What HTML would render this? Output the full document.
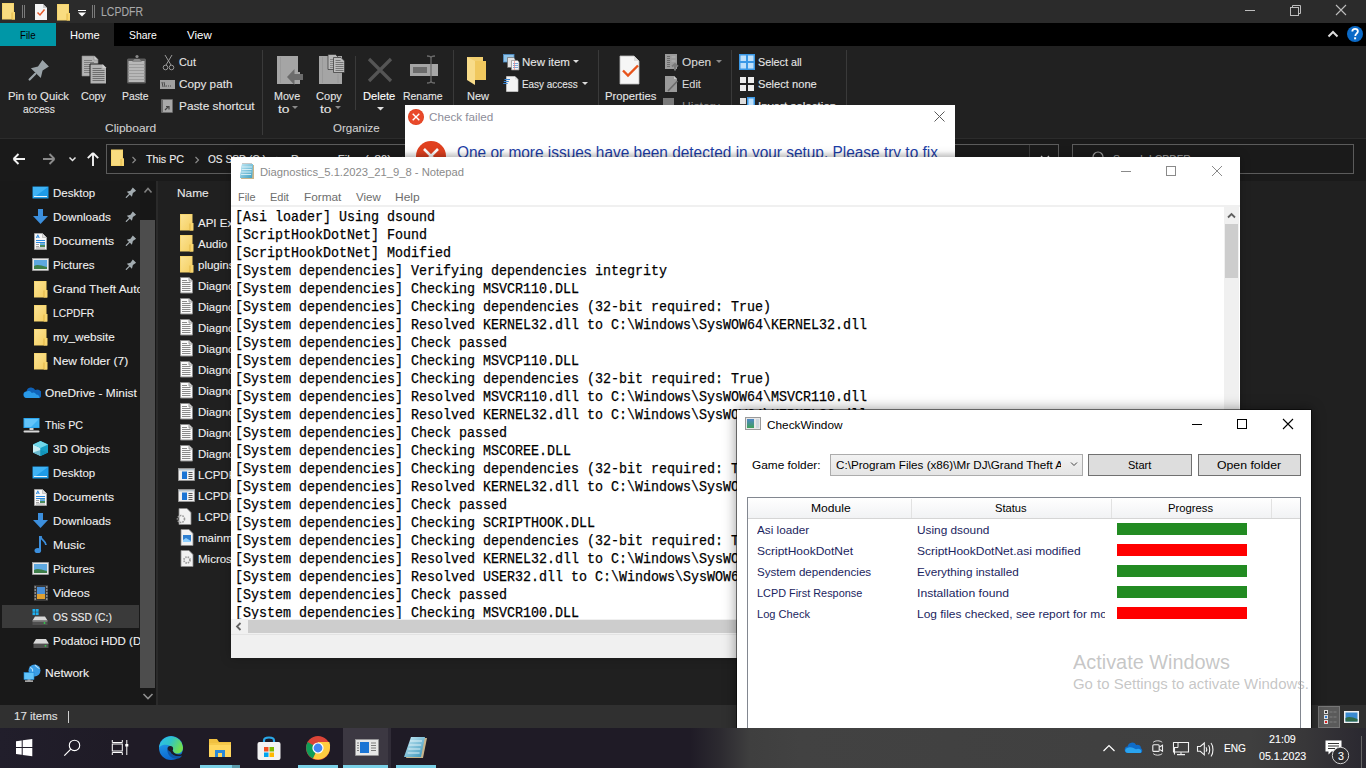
<!DOCTYPE html>
<html><head><meta charset="utf-8"><title>LCPDFR</title>
<style>
*{margin:0;padding:0;box-sizing:border-box}
html,body{width:1366px;height:768px;overflow:hidden;background:#202020;font-family:"Liberation Sans",sans-serif;font-size:12px;color:#fff}
.a{position:absolute}
.t{position:absolute;white-space:nowrap;line-height:1;transform-origin:0 0}
.m{position:absolute;white-space:pre;font-family:"Liberation Mono",monospace;font-size:14.5px;line-height:18px;color:#000;transform:scaleX(0.9195);transform-origin:0 0;-webkit-text-stroke:0.25px #000}
svg{display:block}
</style></head><body>
<div class="a" style="left:0px;top:0px;width:1366px;height:23px;background:#2b2b2b;"></div>
<svg class="a" style="left:0px;top:0px;" width="100" height="23" viewBox="0 0 100 23">
<path d="M2 3h12v9h1v7.5H2z" fill="#f6d46a"/><path d="M2.8 3.8h10.4v14.9H2.8z" fill="#f9dc80"/><path d="M12 12h3v7.5h-3z" fill="#f8d670"/><path d="M12 12.5v7" stroke="#dcae3c" stroke-width="0.8"/>
<rect x="22" y="5" width="1" height="13" fill="#7a7a7a"/><rect x="24" y="5" width="1" height="13" fill="#7a7a7a"/>
<path d="M35 4h8l4 4v12H35z" fill="#f5f5f5"/><path d="M43 4v4h4" fill="#ccc"/><path d="M37.5 12.5l2.5 2.5 4.5-5.5" stroke="#e55a2b" stroke-width="1.5" fill="none"/>
<path d="M57 4h12v9h1v7.5H57z" fill="#f6d46a"/><path d="M57.8 4.8h10.4v14.9H57.8z" fill="#f9dc80"/><path d="M67 13h3v7.5h-3z" fill="#f8d670"/><path d="M67 13.5v7" stroke="#dcae3c" stroke-width="0.8"/>
<rect x="78" y="10" width="8" height="1" fill="#fff"/><path d="M78 12.5h8l-4 4z" fill="#fff"/>
<rect x="92" y="5" width="1" height="13" fill="#7a7a7a"/><rect x="94" y="5" width="1" height="13" fill="#7a7a7a"/>
</svg>
<div class="t" style="left:101.00px;top:6.42px;font-size:12.5px;color:#a9a9a9;-webkit-text-stroke:0.1px #a9a9a9;transform:scaleX(0.8400);">LCPDFR</div>
<svg class="a" style="left:1240px;top:0px;" width="126" height="23" viewBox="0 0 126 23">
<rect x="5" y="10" width="10" height="1" fill="#bdbdbd"/>
<rect x="50.5" y="7.5" width="8" height="8" fill="none" stroke="#bdbdbd"/><path d="M52.5 7.5v-2h8v8h-2" fill="none" stroke="#bdbdbd"/>
<path d="M96 5l10 10M106 5l-10 10" stroke="#bdbdbd" stroke-width="1.1"/>
</svg>
<div class="a" style="left:0px;top:23px;width:1366px;height:23px;background:#000;"></div>
<div class="a" style="left:0px;top:23px;width:56px;height:23px;background:#0097a7;"></div>
<div class="a" style="left:56px;top:23px;width:58px;height:23px;background:#212121;"></div>
<div class="t" style="left:20.00px;top:30.27px;font-size:11.5px;color:#000;transform:scaleX(0.8421);">File</div>
<div class="t" style="left:70.00px;top:30.27px;font-size:11.5px;color:#fff;transform:scaleX(0.9677);">Home</div>
<div class="t" style="left:129.00px;top:30.27px;font-size:11.5px;color:#fff;transform:scaleX(0.9032);">Share</div>
<div class="t" style="left:187.00px;top:30.27px;font-size:11.5px;color:#fff;transform:scaleX(1.0000);">View</div>
<svg class="a" style="left:1320px;top:23px;" width="46" height="23" viewBox="0 0 46 23">
<path d="M8.5 13.5l4.5-4.5 4.5 4.5" stroke="#dcdcdc" stroke-width="2" fill="none"/>
<circle cx="35" cy="11" r="8" fill="#0b6ac7"/>
<path d="M32.3 8.6c0-1.8 1.2-2.8 2.8-2.8s2.8 1 2.8 2.5c0 1.2-.7 1.8-1.5 2.4-.7.5-1 .9-1 1.8v.4" stroke="#fff" stroke-width="1.8" fill="none"/>
<rect x="34.1" y="14.3" width="2" height="2" fill="#fff"/>
</svg>
<div class="a" style="left:0px;top:46px;width:1366px;height:92px;background:#212121;"></div>
<div class="a" style="left:0px;top:138px;width:1366px;height:1px;background:#2c2c2c;"></div>
<div class="a" style="left:262px;top:50px;width:1px;height:85px;background:#3a3a3a;"></div>
<div class="a" style="left:453px;top:50px;width:1px;height:85px;background:#3a3a3a;"></div>
<div class="a" style="left:598px;top:50px;width:1px;height:85px;background:#3a3a3a;"></div>
<div class="a" style="left:731px;top:50px;width:1px;height:85px;background:#3a3a3a;"></div>
<div class="a" style="left:846px;top:50px;width:1px;height:85px;background:#3a3a3a;"></div>
<div class="a" style="left:355px;top:56px;width:1px;height:54px;background:#3a3a3a;"></div>
<svg class="a" style="left:20px;top:50px;" width="40" height="40" viewBox="0 0 40 40"><path d="M22.4 9.9L28.9 16.4 22.6 20.6 20.8 27.9 10.9 18.2 18 16.5z" fill="#9aa3a8"/>
<path d="M15.3 23.8L9.6 29.5" stroke="#9aa3a8" stroke-width="2.2" stroke-linecap="round"/>
</svg>
<div class="t" style="left:8.00px;top:91.27px;font-size:11.5px;color:#e6e6e6;-webkit-text-stroke:0.1px #e6e6e6;transform:scaleX(0.9841);">Pin to Quick</div>
<div class="t" style="left:23.00px;top:104.27px;font-size:11.5px;color:#e6e6e6;-webkit-text-stroke:0.1px #e6e6e6;transform:scaleX(0.8889);">access</div>
<svg class="a" style="left:76px;top:50px;" width="76" height="40" viewBox="0 0 76 40">
<path d="M6 6h12.5l3.5 3.5V26H6z" fill="#b3b3b3" stroke="#8a8a8a" stroke-width="0.6"/>
<path d="M18 6v4h4" fill="#cfcfcf" stroke="#8a8a8a" stroke-width="0.6"/>
<path d="M8 10.5h8M8 12.5h10M8 14.5h10M8 16.5h10M8 18.5h10M8 20.5h10M8 22.5h10" stroke="#7d7d7d" stroke-width="1"/>
<path d="M14 14h12.5l4 4V34H14z" fill="#b3b3b3" stroke="#1f1f1f" stroke-width="1"/>
<path d="M26.5 14v4h4" fill="#cfcfcf"/>
<path d="M16.5 18.5h9M16.5 20.5h12M16.5 22.5h12M16.5 24.5h12M16.5 26.5h12M16.5 28.5h12M16.5 30.5h12" stroke="#6e6e6e" stroke-width="1"/>
<rect x="51" y="8.5" width="19" height="25" rx="1.5" fill="#5e5e5e"/>
<rect x="52.5" y="11" width="16" height="21" fill="#b8b8b8"/>
<path d="M52.5 14.5h16M52.5 17.5h16M52.5 20.5h16M52.5 23.5h16M52.5 26.5h16M52.5 29.5h16" stroke="#9d9d9d" stroke-width="1"/>
<path d="M56 12l2.5-3h5l2.5 3z" fill="#8a8a8a"/><circle cx="61" cy="6.5" r="1.6" fill="#8a8a8a"/>
</svg>
<div class="t" style="left:81.00px;top:91.27px;font-size:11.5px;color:#e6e6e6;-webkit-text-stroke:0.1px #e6e6e6;transform:scaleX(0.9259);">Copy</div>
<div class="t" style="left:122.00px;top:91.27px;font-size:11.5px;color:#e6e6e6;-webkit-text-stroke:0.1px #e6e6e6;transform:scaleX(0.9000);">Paste</div>
<svg class="a" style="left:161px;top:54px;" width="16" height="17" viewBox="0 0 16 17"><path d="M4 1l6 10M11 1L5 11" stroke="#9a9a9a" stroke-width="1"/>
<circle cx="4.5" cy="13.5" r="2.3" fill="none" stroke="#9a9a9a"/><circle cx="10.5" cy="13.5" r="2.3" fill="none" stroke="#9a9a9a"/></svg>
<div class="t" style="left:179.00px;top:57.27px;font-size:11.5px;color:#e6e6e6;-webkit-text-stroke:0.1px #e6e6e6;transform:scaleX(0.9474);">Cut</div>
<svg class="a" style="left:160px;top:79px;" width="16" height="11" viewBox="0 0 16 11"><rect x="0" y="1" width="15" height="9" fill="#a0a0a0"/><path d="M2 3l1 5M4 3l1 5M6 7h1M8 7h1M10 7h1" stroke="#333" stroke-width="0.8"/></svg>
<div class="t" style="left:179.00px;top:79.27px;font-size:11.5px;color:#e6e6e6;-webkit-text-stroke:0.1px #e6e6e6;transform:scaleX(1.0192);">Copy path</div>
<svg class="a" style="left:160px;top:97px;" width="16" height="17" viewBox="0 0 16 17"><rect x="1" y="2" width="12" height="14" rx="1" fill="#6a6a6a"/><rect x="3" y="3" width="9" height="12" fill="#a8a8a8"/>
<path d="M5 13l3-3M6 9.5h3v3" stroke="#444" stroke-width="1.2" fill="none"/></svg>
<div class="t" style="left:179.00px;top:101.27px;font-size:11.5px;color:#e6e6e6;-webkit-text-stroke:0.1px #e6e6e6;transform:scaleX(1.0270);">Paste shortcut</div>
<div class="t" style="left:105.00px;top:123.27px;font-size:11.5px;color:#cfcfcf;-webkit-text-stroke:0.1px #cfcfcf;transform:scaleX(1.0408);">Clipboard</div>
<svg class="a" style="left:270px;top:50px;" width="80" height="40" viewBox="0 0 80 40">
<rect x="7" y="6" width="21" height="28" fill="#a5a5a5"/><path d="M10.5 7v26" stroke="#9a9a9a" stroke-width="1"/>
<path d="M27 22h3v12h-3z" fill="#a5a5a5"/>
<path d="M17 27l7.5-8v5h8.5v6H24.5v5z" fill="#6c6c6c"/>
<rect x="49" y="6" width="23" height="28" fill="#a5a5a5"/><path d="M52.5 7v26M68 24v9" stroke="#999" stroke-width="1"/>
<path d="M58 4.5h7.5l3 3V19.5H58z" fill="#b8b8b8" stroke="#333" stroke-width="0.7"/>
<path d="M60 9.5h6M60 11.5h6M60 13.5h6M60 15.5h6M60 17.5h6" stroke="#7a7a7a" stroke-width="0.8"/>
<path d="M63.5 7.5h7.5l3.5 3.5V22.5H63.5z" fill="#bdbdbd" stroke="#333" stroke-width="0.7"/>
<path d="M65.5 10.5h5M65.5 12.5h8M65.5 14.5h8M65.5 16.5h8M65.5 18.5h8M65.5 20.5h8" stroke="#6e6e6e" stroke-width="0.9"/>
</svg>
<div class="t" style="left:274.00px;top:91.27px;font-size:11.5px;color:#e6e6e6;-webkit-text-stroke:0.1px #e6e6e6;transform:scaleX(0.9310);">Move</div>
<div class="t" style="left:278.00px;top:104.27px;font-size:11.5px;color:#e6e6e6;-webkit-text-stroke:0.1px #e6e6e6;transform:scaleX(1.2000);">to</div>
<svg class="a" style="left:292px;top:106px;" width="8" height="4" viewBox="0 0 8 4"><path d="M0 0h6l-3 3z" fill="#8a8a8a"/></svg>
<div class="t" style="left:316.00px;top:91.27px;font-size:11.5px;color:#e6e6e6;-webkit-text-stroke:0.1px #e6e6e6;transform:scaleX(0.9630);">Copy</div>
<div class="t" style="left:320.00px;top:104.27px;font-size:11.5px;color:#e6e6e6;-webkit-text-stroke:0.1px #e6e6e6;transform:scaleX(1.2000);">to</div>
<svg class="a" style="left:335px;top:106px;" width="8" height="4" viewBox="0 0 8 4"><path d="M0 0h6l-3 3z" fill="#8a8a8a"/></svg>
<svg class="a" style="left:366px;top:56px;" width="28" height="28" viewBox="0 0 28 28"><path d="M3 3l22 22M25 3L3 25" stroke="#555" stroke-width="3.2"/></svg>
<div class="t" style="left:363.00px;top:91.27px;font-size:11.5px;color:#ffffff;-webkit-text-stroke:0.1px #ffffff;transform:scaleX(0.9706);">Delete</div>
<svg class="a" style="left:377px;top:107px;" width="8" height="4" viewBox="0 0 8 4"><path d="M0 0h7l-3.5 3.5z" fill="#e0e0e0"/></svg>
<svg class="a" style="left:408px;top:55px;" width="32" height="30" viewBox="0 0 32 30"><rect x="2" y="9" width="28" height="12" fill="#a5a5a5"/><rect x="5" y="12" width="14" height="6" fill="#6c6c6c"/>
<path d="M19 1c3 0 4 1 4 2v23c0 1 1 2 4 2M27 1c-3 0-4 1-4 2v23c0 1-1 2-4 2" stroke="#6c6c6c" stroke-width="1.3" fill="none"/></svg>
<div class="t" style="left:403.00px;top:91.27px;font-size:11.5px;color:#e6e6e6;-webkit-text-stroke:0.1px #e6e6e6;transform:scaleX(0.9091);">Rename</div>
<div class="t" style="left:333.00px;top:123.27px;font-size:11.5px;color:#cfcfcf;-webkit-text-stroke:0.1px #cfcfcf;transform:scaleX(1.0000);">Organize</div>
<svg class="a" style="left:465px;top:56px;" width="24" height="30" viewBox="0 0 24 30"><path d="M2 1h16v6h3v17H2z" fill="#f2cf6f"/><path d="M2 1l8 4v24l-8-5z" fill="#f8dc8a"/><path d="M10 5h11v19H10z" fill="#f0c85e"/></svg>
<div class="t" style="left:467.00px;top:91.27px;font-size:11.5px;color:#e6e6e6;-webkit-text-stroke:0.1px #e6e6e6;transform:scaleX(0.9583);">New</div>
<svg class="a" style="left:495px;top:50px;" width="30" height="45" viewBox="0 0 30 45">
<rect x="8.5" y="4.5" width="10.5" height="7.5" fill="#8fc3e8" stroke="#4f8fc8" stroke-width="0.8"/>
<path d="M12.5 7.5h6l1.5 1.5v8.5h-7.5z" fill="#e3e3e3" stroke="#6a6a6a" stroke-width="0.7"/>
<path d="M16.5 10.5h6l1.5 1.5v8h-7.5z" fill="#f5f5f5" stroke="#8a8a8a" stroke-width="0.7"/>
<path d="M18 13.5h5M18 15.5h5M18 17.5h5" stroke="#6a9fd8" stroke-width="0.9"/><path d="M19.5 11v9" stroke="#e88" stroke-width="0.7"/>
<path d="M11.5 26.5h8.5l3 3V41.5H11.5z" fill="#f4f4f4" stroke="#d0d0d0" stroke-width="0.7"/><path d="M20 26.5v3h3" fill="#ddd"/>
<path d="M9.5 29.5h5.5M8.8 31.5h5M8.2 33.5h4.5" stroke="#3a86d4" stroke-width="1"/>
</svg>
<div class="t" style="left:522.00px;top:57.27px;font-size:11.5px;color:#e6e6e6;-webkit-text-stroke:0.1px #e6e6e6;transform:scaleX(1.0000);">New item</div>
<svg class="a" style="left:573px;top:60px;" width="8" height="4" viewBox="0 0 8 4"><path d="M0 0h6l-3 3z" fill="#dcdcdc"/></svg>
<div class="t" style="left:522.00px;top:79.27px;font-size:11.5px;color:#e6e6e6;-webkit-text-stroke:0.1px #e6e6e6;transform:scaleX(0.8615);">Easy access</div>
<svg class="a" style="left:582px;top:82px;" width="8" height="4" viewBox="0 0 8 4"><path d="M0 0h6l-3 3z" fill="#dcdcdc"/></svg>
<svg class="a" style="left:617px;top:54px;" width="26" height="32" viewBox="0 0 26 32"><path d="M3 2h14l5 5v23H3z" fill="#f6f6f6" stroke="#bdbdbd" stroke-width="0.8"/><path d="M17 2v5h5" fill="#dcdcdc"/>
<path d="M6 16.5l5 5 10-10" stroke="#e8541c" stroke-width="2.4" fill="none"/></svg>
<div class="t" style="left:605.00px;top:91.27px;font-size:11.5px;color:#e6e6e6;-webkit-text-stroke:0.1px #e6e6e6;transform:scaleX(0.9811);">Properties</div>
<svg class="a" style="left:655px;top:50px;" width="105" height="56" viewBox="0 0 105 56">
<rect x="10" y="4" width="12" height="15" fill="#9a9a9a"/>
<path d="M12 6.5h3M12 8.5h3M12 10.5h3M12 12.5h3M12 14.5h3M12 16.5h3" stroke="#6a6a6a" stroke-width="1"/>
<path d="M16.5 7h4M16.5 11h4" stroke="#bdbdbd" stroke-width="0.8"/>
<path d="M17 16.5l3-2.5 3 2.5M20 14.5v6" stroke="#7a7a7a" stroke-width="2" fill="none"/>
<path d="M10 26h9l3 3v13H10z" fill="#9a9a9a"/><path d="M19 26v3h3" fill="#c8c8c8"/>
<path d="M13 41L22.5 31" stroke="#6a6a6a" stroke-width="1.6"/>
<rect x="8" y="48" width="11" height="8" fill="#7a7a7a"/>
<rect x="84" y="4" width="16" height="16" fill="#3a98e6"/>
<rect x="85.5" y="5.5" width="5.5" height="5.5" fill="#bfe0fa"/><rect x="93" y="5.5" width="5.5" height="5.5" fill="#bfe0fa"/>
<rect x="85.5" y="13" width="5.5" height="5.5" fill="#bfe0fa"/><rect x="93" y="13" width="5.5" height="5.5" fill="#bfe0fa"/>
<rect x="85" y="27" width="6" height="6" fill="#eeeeee"/><rect x="93" y="27" width="6" height="6" fill="#eeeeee"/>
<rect x="85" y="35" width="6" height="6" fill="#eeeeee"/><rect x="93" y="35" width="6" height="6" fill="#eeeeee"/>
<rect x="85" y="48" width="6" height="6" fill="#dddddd"/><rect x="92" y="47" width="8" height="9" fill="#3a98e6"/><rect x="93.5" y="48.5" width="5" height="7" fill="#bfe0fa"/>
</svg>
<div class="t" style="left:682.00px;top:57.27px;font-size:11.5px;color:#d8d8d8;-webkit-text-stroke:0.1px #d8d8d8;transform:scaleX(1.0357);">Open</div>
<svg class="a" style="left:716px;top:60px;" width="8" height="4" viewBox="0 0 8 4"><path d="M0 0h6l-3 3z" fill="#8a8a8a"/></svg>
<div class="t" style="left:682.00px;top:79.27px;font-size:11.5px;color:#d8d8d8;-webkit-text-stroke:0.1px #d8d8d8;transform:scaleX(0.9524);">Edit</div>
<div class="t" style="left:682.00px;top:101.27px;font-size:11.5px;color:#8a8a8a;transform:scaleX(1.0556);">History</div>
<div class="t" style="left:758.00px;top:57.27px;font-size:11.5px;color:#e6e6e6;-webkit-text-stroke:0.1px #e6e6e6;transform:scaleX(0.9362);">Select all</div>
<div class="t" style="left:758.00px;top:79.27px;font-size:11.5px;color:#e6e6e6;-webkit-text-stroke:0.1px #e6e6e6;transform:scaleX(0.9672);">Select none</div>
<div class="t" style="left:758.00px;top:101.27px;font-size:11.5px;color:#e6e6e6;-webkit-text-stroke:0.1px #e6e6e6;transform:scaleX(1.0130);">Invert selection</div>
<div class="a" style="left:0px;top:139px;width:1366px;height:42px;background:#1a1a1a;"></div>
<svg class="a" style="left:0px;top:150px;" width="106" height="18" viewBox="0 0 106 18">
<path d="M13.5 9H25M13.5 9l5-5M13.5 9l5 5" stroke="#f2f2f2" stroke-width="1.9" fill="none"/>
<path d="M43 9H54.5M54.5 9l-5-5M54.5 9l-5 5" stroke="#8a8a8a" stroke-width="1.9" fill="none"/>
<path d="M69.5 7.5l3 3 3-3" stroke="#e6e6e6" stroke-width="1.5" fill="none"/>
<path d="M93 16V3M93 3l-5.2 5.2M93 3l5.2 5.2" stroke="#f2f2f2" stroke-width="1.9" fill="none"/>
</svg>
<div class="a" style="left:106px;top:144px;width:953px;height:30px;background:transparent;border:1px solid #5b5b5b"></div>
<div class="a" style="left:1072px;top:144px;width:282px;height:30px;background:transparent;border:1px solid #5b5b5b"></div>
<div class="a" style="left:1029px;top:145px;width:1px;height:28px;background:#3a3a3a;"></div>
<svg class="a" style="left:111px;top:149px;" width="16" height="18" viewBox="0 0 16 18"><path d="M0 0.5h12v9h1v7.5H0z" fill="#f6d46a"/><path d="M0.8 1.3h10.4v14.9H0.8z" fill="#f9dc80"/><path d="M10 9.5h3v7.5h-3z" fill="#f8d670"/><path d="M10 10v7" stroke="#dcae3c" stroke-width="0.8"/></svg>
<svg class="a" style="left:130px;top:155px;" width="8" height="10" viewBox="0 0 8 10"><path d="M2.5 2l3 3-3 3" stroke="#8a8a8a" stroke-width="1.2" fill="none"/></svg>
<div class="t" style="left:146.00px;top:154.27px;font-size:11.5px;color:#f0f0f0;-webkit-text-stroke:0.1px #f0f0f0;transform:scaleX(0.9286);">This PC</div>
<svg class="a" style="left:193px;top:155px;" width="8" height="10" viewBox="0 0 8 10"><path d="M2.5 2l3 3-3 3" stroke="#8a8a8a" stroke-width="1.2" fill="none"/></svg>
<div class="t" style="left:208.00px;top:154.27px;font-size:11.5px;color:#f0f0f0;-webkit-text-stroke:0.1px #f0f0f0;transform:scaleX(0.8788);">OS SSD (C:)</div>
<svg class="a" style="left:274px;top:155px;" width="8" height="10" viewBox="0 0 8 10"><path d="M2.5 2l3 3-3 3" stroke="#8a8a8a" stroke-width="1.2" fill="none"/></svg>
<div class="t" style="left:291.00px;top:154.27px;font-size:11.5px;color:#f0f0f0;-webkit-text-stroke:0.1px #f0f0f0;transform:scaleX(0.9901);">Program Files (x86)</div>
<svg class="a" style="left:400px;top:155px;" width="8" height="10" viewBox="0 0 8 10"><path d="M2.5 2l3 3-3 3" stroke="#8a8a8a" stroke-width="1.2" fill="none"/></svg>
<svg class="a" style="left:1040px;top:154px;" width="10" height="8" viewBox="0 0 10 8"><path d="M1 2l4 4 4-4" stroke="#cfcfcf" stroke-width="1.3" fill="none"/></svg>
<svg class="a" style="left:1088px;top:150px;" width="18" height="18" viewBox="0 0 18 18"><circle cx="10" cy="7" r="5" fill="none" stroke="#999" stroke-width="1.2"/><path d="M6.5 10.5L2 15" stroke="#999" stroke-width="1.4"/></svg>
<div class="t" style="left:1113.00px;top:154.27px;font-size:11.5px;color:#9a9a9a;-webkit-text-stroke:0.1px #9a9a9a;transform:scaleX(0.9070);">Search LCPDFR</div>
<div class="a" style="left:0px;top:181px;width:1366px;height:524px;background:#202020;"></div>
<div class="a" style="left:0px;top:181px;width:140px;height:524px;background:#191919;"></div>
<div class="a" style="left:140px;top:181px;width:16px;height:524px;background:#171717;"></div>
<div class="a" style="left:156px;top:181px;width:2px;height:524px;background:#2a2a2a;"></div>
<div class="a" style="left:140px;top:220px;width:15px;height:468px;background:#4d4d4d;"></div>
<svg class="a" style="left:140px;top:183px;" width="16" height="14" viewBox="0 0 16 14"><path d="M4.5 9.5l3.5-4 3.5 4" stroke="#808080" stroke-width="1.6" fill="none"/></svg>
<svg class="a" style="left:140px;top:690px;" width="16" height="14" viewBox="0 0 16 14"><path d="M3.5 4l4.5 4.5 4.5-4.5" stroke="#8f8f8f" stroke-width="1.6" fill="none"/></svg>
<div class="a" style="left:0px;top:181px;width:140px;height:524px;background:transparent;overflow:hidden;">
<svg class="a" style="left:32px;top:5px;" width="18" height="14" viewBox="0 0 18 14"><rect x="0.5" y="0.5" width="16" height="12" fill="#1e9be8"/><path d="M1 1h15L1 12z" fill="#3fb3f5"/><rect x="2" y="10" width="13" height="1" fill="#e6f4fc"/></svg>
<div class="t" style="left:53.00px;top:6.77px;font-size:11.5px;color:#f0f0f0;-webkit-text-stroke:0.1px #f0f0f0;transform:scaleX(1.0000);">Desktop</div>
<svg class="a" style="left:125px;top:5px;" width="12" height="13" viewBox="0 0 12 13"><path d="M7.8 1.4L11.1 4.8 7.9 7 6.9 10.8 1.8 5.7 5.5 4.8z" fill="#a3acb1"/><path d="M4.3 8.4L1.3 11.4" stroke="#a3acb1" stroke-width="1.3" stroke-linecap="round"/></svg>
<svg class="a" style="left:32px;top:27px;" width="18" height="18" viewBox="0 0 18 18"><path d="M6 1h5v7h5l-7.5 8L1 8h5z" fill="#3c8fdd"/></svg>
<div class="t" style="left:53.00px;top:30.77px;font-size:11.5px;color:#f0f0f0;-webkit-text-stroke:0.1px #f0f0f0;transform:scaleX(1.0175);">Downloads</div>
<svg class="a" style="left:125px;top:29px;" width="12" height="13" viewBox="0 0 12 13"><path d="M7.8 1.4L11.1 4.8 7.9 7 6.9 10.8 1.8 5.7 5.5 4.8z" fill="#a3acb1"/><path d="M4.3 8.4L1.3 11.4" stroke="#a3acb1" stroke-width="1.3" stroke-linecap="round"/></svg>
<svg class="a" style="left:34px;top:52px;" width="14" height="18" viewBox="0 0 14 18"><path d="M0.5 0.5h8l4 4v12H0.5z" fill="#f7f7f7" stroke="#a8a8a8" stroke-width="0.8"/><path d="M8.5 0.5v4h4" fill="#ddd" stroke="#a8a8a8" stroke-width="0.6"/><path d="M2.3 5l1.5-3.2 1.5 3.2M2.8 4h2" stroke="#2b8ae0" stroke-width="0.9" fill="none"/><path d="M2 7.5h9M2 9.5h9" stroke="#2b8ae0" stroke-width="1"/><path d="M2 11.5h3M2 13.5h3M2 15h9" stroke="#9a9a9a" stroke-width="0.9"/><rect x="6" y="10.5" width="5" height="3.5" fill="#4a8a5a"/><rect x="6" y="10.5" width="5" height="1.5" fill="#5aaae8"/></svg>
<div class="t" style="left:53.00px;top:54.77px;font-size:11.5px;color:#f0f0f0;-webkit-text-stroke:0.1px #f0f0f0;transform:scaleX(1.0517);">Documents</div>
<svg class="a" style="left:125px;top:53px;" width="12" height="13" viewBox="0 0 12 13"><path d="M7.8 1.4L11.1 4.8 7.9 7 6.9 10.8 1.8 5.7 5.5 4.8z" fill="#a3acb1"/><path d="M4.3 8.4L1.3 11.4" stroke="#a3acb1" stroke-width="1.3" stroke-linecap="round"/></svg>
<svg class="a" style="left:32px;top:76px;" width="18" height="16" viewBox="0 0 18 16"><rect x="0.5" y="1.5" width="16" height="12" fill="#e8e8e8" stroke="#aaa" stroke-width="0.6"/><rect x="2" y="3" width="13" height="9" fill="#5ea8e0"/><path d="M2 9c3-2 6-1 13 1v2H2z" fill="#3f7f4a"/></svg>
<div class="t" style="left:53.00px;top:78.77px;font-size:11.5px;color:#f0f0f0;-webkit-text-stroke:0.1px #f0f0f0;transform:scaleX(1.0000);">Pictures</div>
<svg class="a" style="left:125px;top:77px;" width="12" height="13" viewBox="0 0 12 13"><path d="M7.8 1.4L11.1 4.8 7.9 7 6.9 10.8 1.8 5.7 5.5 4.8z" fill="#a3acb1"/><path d="M4.3 8.4L1.3 11.4" stroke="#a3acb1" stroke-width="1.3" stroke-linecap="round"/></svg>
<svg class="a" style="left:34px;top:100px;" width="14" height="17" viewBox="0 0 14 17"><defs><linearGradient id="fg34100" x1="0" y1="0" x2="1" y2="1"><stop offset="0" stop-color="#fbe394"/><stop offset="1" stop-color="#f5cf62"/></linearGradient></defs><path d="M0 0h12.5v9h0.8v7.5H0z" fill="#f6d46a"/><path d="M0.8 0.8h11v15H0.8z" fill="url(#fg34100)"/><path d="M10 9h3.3v7.5H10z" fill="#f8d670"/><path d="M10 9.5v7" stroke="#dcae3c" stroke-width="0.8"/></svg>
<div class="t" style="left:53.00px;top:102.77px;font-size:11.5px;color:#f0f0f0;-webkit-text-stroke:0.1px #f0f0f0;transform:scaleX(1.0306);">Grand Theft Auto V</div>
<svg class="a" style="left:34px;top:124px;" width="14" height="17" viewBox="0 0 14 17"><defs><linearGradient id="fg34124" x1="0" y1="0" x2="1" y2="1"><stop offset="0" stop-color="#fbe394"/><stop offset="1" stop-color="#f5cf62"/></linearGradient></defs><path d="M0 0h12.5v9h0.8v7.5H0z" fill="#f6d46a"/><path d="M0.8 0.8h11v15H0.8z" fill="url(#fg34124)"/><path d="M10 9h3.3v7.5H10z" fill="#f8d670"/><path d="M10 9.5v7" stroke="#dcae3c" stroke-width="0.8"/></svg>
<div class="t" style="left:53.00px;top:126.77px;font-size:11.5px;color:#f0f0f0;-webkit-text-stroke:0.1px #f0f0f0;transform:scaleX(0.8936);">LCPDFR</div>
<svg class="a" style="left:34px;top:148px;" width="14" height="17" viewBox="0 0 14 17"><defs><linearGradient id="fg34148" x1="0" y1="0" x2="1" y2="1"><stop offset="0" stop-color="#fbe394"/><stop offset="1" stop-color="#f5cf62"/></linearGradient></defs><path d="M0 0h12.5v9h0.8v7.5H0z" fill="#f6d46a"/><path d="M0.8 0.8h11v15H0.8z" fill="url(#fg34148)"/><path d="M10 9h3.3v7.5H10z" fill="#f8d670"/><path d="M10 9.5v7" stroke="#dcae3c" stroke-width="0.8"/></svg>
<div class="t" style="left:53.00px;top:150.77px;font-size:11.5px;color:#f0f0f0;-webkit-text-stroke:0.1px #f0f0f0;transform:scaleX(1.0164);">my_website</div>
<svg class="a" style="left:34px;top:172px;" width="14" height="17" viewBox="0 0 14 17"><defs><linearGradient id="fg34172" x1="0" y1="0" x2="1" y2="1"><stop offset="0" stop-color="#fbe394"/><stop offset="1" stop-color="#f5cf62"/></linearGradient></defs><path d="M0 0h12.5v9h0.8v7.5H0z" fill="#f6d46a"/><path d="M0.8 0.8h11v15H0.8z" fill="url(#fg34172)"/><path d="M10 9h3.3v7.5H10z" fill="#f8d670"/><path d="M10 9.5v7" stroke="#dcae3c" stroke-width="0.8"/></svg>
<div class="t" style="left:53.00px;top:174.77px;font-size:11.5px;color:#f0f0f0;-webkit-text-stroke:0.1px #f0f0f0;transform:scaleX(1.0417);">New folder (7)</div>
<svg class="a" style="left:23px;top:206px;" width="18" height="12" viewBox="0 0 18 12"><path d="M3.8 11a3.3 3.3 0 0 1-0.3-6.6A4.6 4.6 0 0 1 12.2 3 3.6 3.6 0 0 1 16.5 11z" fill="#0f62b8"/><path d="M3.8 11a3.3 3.3 0 0 1-0.5-6.5 4 4 0 0 1 5.5 1.5 3.6 3.6 0 0 1 4.5 1.5 3.2 3.2 0 0 1 3.2 3.5z" fill="#2a9ae8"/></svg>
<div class="t" style="left:45.00px;top:206.77px;font-size:11.5px;color:#f0f0f0;-webkit-text-stroke:0.1px #f0f0f0;transform:scaleX(1.0333);">OneDrive - Minist</div>
<svg class="a" style="left:22px;top:236px;" width="18" height="17" viewBox="0 0 18 17"><rect x="1.5" y="1" width="16" height="10" fill="#2aa6ef"/><path d="M2.5 2h14v8h-14z" fill="#62c4fa"/><path d="M9 10l7.5-7.5v7.5z" fill="#3cb0f2"/><rect x="7.5" y="11" width="4" height="2" fill="#d0d0d0"/><rect x="1.5" y="13.5" width="16" height="2" rx="1" fill="#d8d8d8"/></svg>
<div class="t" style="left:45.00px;top:238.77px;font-size:11.5px;color:#f0f0f0;-webkit-text-stroke:0.1px #f0f0f0;transform:scaleX(0.9286);">This PC</div>
<div class="a" style="left:2px;top:605px;width:137px;height:23px;background:#3a3a3a;top:424px"></div>
<svg class="a" style="left:32px;top:259px;" width="17" height="17" viewBox="0 0 17 17"><path d="M8.5 1L16 4.5v8L8.5 16 1 12.5v-8z" fill="#1aa3c8"/><path d="M8.5 8L1 4.5v8L8.5 16z" fill="#c8eff5"/><path d="M8.5 8L16 4.5v8L8.5 16z" fill="#17a0c6"/><path d="M1 4.5L8.5 1 16 4.5 8.5 8z" fill="#70d8ea"/><path d="M1 12.5L8.5 16 16 12.5 8.5 10z" fill="#0e86ab" opacity="0.5"/></svg>
<div class="t" style="left:53.00px;top:262.77px;font-size:11.5px;color:#f0f0f0;-webkit-text-stroke:0.1px #f0f0f0;transform:scaleX(1.0000);">3D Objects</div>
<svg class="a" style="left:32px;top:285px;" width="18" height="14" viewBox="0 0 18 14"><rect x="0.5" y="0.5" width="16" height="12" fill="#1e9be8"/><path d="M1 1h15L1 12z" fill="#3fb3f5"/><rect x="2" y="10" width="13" height="1" fill="#e6f4fc"/></svg>
<div class="t" style="left:53.00px;top:286.77px;font-size:11.5px;color:#f0f0f0;-webkit-text-stroke:0.1px #f0f0f0;transform:scaleX(1.0000);">Desktop</div>
<svg class="a" style="left:34px;top:308px;" width="14" height="18" viewBox="0 0 14 18"><path d="M0.5 0.5h8l4 4v12H0.5z" fill="#f7f7f7" stroke="#a8a8a8" stroke-width="0.8"/><path d="M8.5 0.5v4h4" fill="#ddd" stroke="#a8a8a8" stroke-width="0.6"/><path d="M2.3 5l1.5-3.2 1.5 3.2M2.8 4h2" stroke="#2b8ae0" stroke-width="0.9" fill="none"/><path d="M2 7.5h9M2 9.5h9" stroke="#2b8ae0" stroke-width="1"/><path d="M2 11.5h3M2 13.5h3M2 15h9" stroke="#9a9a9a" stroke-width="0.9"/><rect x="6" y="10.5" width="5" height="3.5" fill="#4a8a5a"/><rect x="6" y="10.5" width="5" height="1.5" fill="#5aaae8"/></svg>
<div class="t" style="left:53.00px;top:310.77px;font-size:11.5px;color:#f0f0f0;-webkit-text-stroke:0.1px #f0f0f0;transform:scaleX(1.0517);">Documents</div>
<svg class="a" style="left:32px;top:331px;" width="18" height="18" viewBox="0 0 18 18"><path d="M6 1h5v7h5l-7.5 8L1 8h5z" fill="#3c8fdd"/></svg>
<div class="t" style="left:53.00px;top:334.77px;font-size:11.5px;color:#f0f0f0;-webkit-text-stroke:0.1px #f0f0f0;transform:scaleX(1.0175);">Downloads</div>
<svg class="a" style="left:34px;top:355px;" width="14" height="18" viewBox="0 0 14 18"><path d="M5 1h2c0 3 5 4 5 8" stroke="#3c8fdd" stroke-width="1.8" fill="none"/><rect x="5" y="1" width="2" height="13" fill="#3c8fdd"/><ellipse cx="3.8" cy="14.5" rx="3.3" ry="2.6" fill="#3c8fdd"/></svg>
<div class="t" style="left:53.00px;top:358.77px;font-size:11.5px;color:#f0f0f0;-webkit-text-stroke:0.1px #f0f0f0;transform:scaleX(1.0667);">Music</div>
<svg class="a" style="left:32px;top:380px;" width="18" height="16" viewBox="0 0 18 16"><rect x="0.5" y="1.5" width="16" height="12" fill="#e8e8e8" stroke="#aaa" stroke-width="0.6"/><rect x="2" y="3" width="13" height="9" fill="#5ea8e0"/><path d="M2 9c3-2 6-1 13 1v2H2z" fill="#3f7f4a"/></svg>
<div class="t" style="left:53.00px;top:382.77px;font-size:11.5px;color:#f0f0f0;-webkit-text-stroke:0.1px #f0f0f0;transform:scaleX(1.0000);">Pictures</div>
<svg class="a" style="left:33px;top:403px;" width="16" height="18" viewBox="0 0 16 18"><rect x="1" y="1" width="14" height="16" fill="#3a3a3a"/><rect x="4" y="3" width="8" height="12" fill="#4a8fd6"/><path d="M4 10h8v5H4z" fill="#e0a030"/><path d="M1.5 3h1.5M1.5 6h1.5M1.5 9h1.5M1.5 12h1.5M1.5 15h1.5M13 3h1.5M13 6h1.5M13 9h1.5M13 12h1.5M13 15h1.5" stroke="#ddd" stroke-width="1"/></svg>
<div class="t" style="left:53.00px;top:406.77px;font-size:11.5px;color:#f0f0f0;-webkit-text-stroke:0.1px #f0f0f0;transform:scaleX(1.0571);">Videos</div>
<svg class="a" style="left:31px;top:427px;" width="18" height="18" viewBox="0 0 18 18"><rect x="1.5" y="1" width="2.8" height="2.8" fill="#1fb0f0"/><rect x="4.8" y="1" width="2.8" height="2.8" fill="#1fb0f0"/><rect x="1.5" y="4.3" width="2.8" height="2.8" fill="#1fb0f0"/><rect x="4.8" y="4.3" width="2.8" height="2.8" fill="#1fb0f0"/><path d="M4 8.5h10l2.5 4H1.5z" fill="#d8d8d8"/><rect x="1.5" y="12.5" width="15" height="4.5" fill="#505050"/><rect x="1.5" y="12.5" width="15" height="1" fill="#9a9a9a"/><circle cx="13.5" cy="15" r="0.9" fill="#2fd04a"/></svg>
<div class="t" style="left:53.00px;top:430.77px;font-size:11.5px;color:#f0f0f0;-webkit-text-stroke:0.1px #f0f0f0;transform:scaleX(0.8939);">OS SSD (C:)</div>
<svg class="a" style="left:32px;top:451px;" width="18" height="18" viewBox="0 0 18 18"><path d="M4 7h10l2.5 4H1.5z" fill="#d8d8d8"/><rect x="1.5" y="11" width="15" height="5" fill="#505050"/><rect x="1.5" y="11" width="15" height="1" fill="#a0a0a0"/><circle cx="13.5" cy="13.8" r="0.9" fill="#2fd04a"/></svg>
<div class="t" style="left:53.00px;top:454.77px;font-size:11.5px;color:#f0f0f0;-webkit-text-stroke:0.1px #f0f0f0;">Podatoci HDD (D:)</div>
<svg class="a" style="left:23px;top:483px;" width="18" height="18" viewBox="0 0 18 18"><circle cx="11.5" cy="6.5" r="6" fill="#3a9de6"/><path d="M7 3.5c2 0.5 3 2 2.5 4M12 1c1.5 1.5 2.5 3 4.5 3.5" stroke="#b8e2fb" stroke-width="1.1" fill="none"/><rect x="1" y="8.5" width="10" height="7" fill="#62c4fa" stroke="#1f8ad8" stroke-width="0.6"/><rect x="4.5" y="15.5" width="3" height="1" fill="#bbb"/><rect x="2" y="16.5" width="8" height="1.2" fill="#ddd"/></svg>
<div class="t" style="left:45.00px;top:486.77px;font-size:11.5px;color:#f0f0f0;-webkit-text-stroke:0.1px #f0f0f0;transform:scaleX(1.0465);">Network</div>
</div>
<div class="a" style="left:158px;top:181px;width:80px;height:524px;background:transparent;overflow:hidden;">
<div class="t" style="left:19.00px;top:7.27px;font-size:11.5px;color:#e8e8e8;-webkit-text-stroke:0.1px #e8e8e8;transform:scaleX(1.0323);">Name</div>
<svg class="a" style="left:22px;top:33px;" width="14" height="17" viewBox="0 0 14 17"><defs><linearGradient id="fg22033" x1="0" y1="0" x2="1" y2="1"><stop offset="0" stop-color="#fbe394"/><stop offset="1" stop-color="#f5cf62"/></linearGradient></defs><path d="M0 0h12.5v9h0.8v7.5H0z" fill="#f6d46a"/><path d="M0.8 0.8h11v15H0.8z" fill="url(#fg22033)"/><path d="M10 9h3.3v7.5H10z" fill="#f8d670"/><path d="M10 9.5v7" stroke="#dcae3c" stroke-width="0.8"/></svg>
<div class="t" style="left:40.00px;top:36.77px;font-size:11.5px;color:#f0f0f0;-webkit-text-stroke:0.1px #f0f0f0;">API Examples</div>
<svg class="a" style="left:22px;top:54px;" width="14" height="17" viewBox="0 0 14 17"><defs><linearGradient id="fg22054" x1="0" y1="0" x2="1" y2="1"><stop offset="0" stop-color="#fbe394"/><stop offset="1" stop-color="#f5cf62"/></linearGradient></defs><path d="M0 0h12.5v9h0.8v7.5H0z" fill="#f6d46a"/><path d="M0.8 0.8h11v15H0.8z" fill="url(#fg22054)"/><path d="M10 9h3.3v7.5H10z" fill="#f8d670"/><path d="M10 9.5v7" stroke="#dcae3c" stroke-width="0.8"/></svg>
<div class="t" style="left:40.00px;top:57.77px;font-size:11.5px;color:#f0f0f0;-webkit-text-stroke:0.1px #f0f0f0;">Audio</div>
<svg class="a" style="left:22px;top:75px;" width="14" height="17" viewBox="0 0 14 17"><defs><linearGradient id="fg22075" x1="0" y1="0" x2="1" y2="1"><stop offset="0" stop-color="#fbe394"/><stop offset="1" stop-color="#f5cf62"/></linearGradient></defs><path d="M0 0h12.5v9h0.8v7.5H0z" fill="#f6d46a"/><path d="M0.8 0.8h11v15H0.8z" fill="url(#fg22075)"/><path d="M10 9h3.3v7.5H10z" fill="#f8d670"/><path d="M10 9.5v7" stroke="#dcae3c" stroke-width="0.8"/></svg>
<div class="t" style="left:40.00px;top:78.77px;font-size:11.5px;color:#f0f0f0;-webkit-text-stroke:0.1px #f0f0f0;">plugins</div>
<svg class="a" style="left:22px;top:96px;" width="14" height="17" viewBox="0 0 14 17"><path d="M0.5 0.5h8.5l3.5 3.5v12H0.5z" fill="#fafafa" stroke="#8c8c8c" stroke-width="1"/><path d="M9 0.5v3.5h3.5" fill="#e0e0e0" stroke="#8c8c8c" stroke-width="0.8"/><path d="M2 3.5h5M2 5.5h8.5M2 7.5h8.5M2 9.5h8.5M2 11.5h8.5M2 13.5h8.5" stroke="#8a8a8a" stroke-width="1"/></svg>
<div class="t" style="left:40.00px;top:99.77px;font-size:11.5px;color:#f0f0f0;-webkit-text-stroke:0.1px #f0f0f0;">Diagnostics_5.1.2023</div>
<svg class="a" style="left:22px;top:117px;" width="14" height="17" viewBox="0 0 14 17"><path d="M0.5 0.5h8.5l3.5 3.5v12H0.5z" fill="#fafafa" stroke="#8c8c8c" stroke-width="1"/><path d="M9 0.5v3.5h3.5" fill="#e0e0e0" stroke="#8c8c8c" stroke-width="0.8"/><path d="M2 3.5h5M2 5.5h8.5M2 7.5h8.5M2 9.5h8.5M2 11.5h8.5M2 13.5h8.5" stroke="#8a8a8a" stroke-width="1"/></svg>
<div class="t" style="left:40.00px;top:120.77px;font-size:11.5px;color:#f0f0f0;-webkit-text-stroke:0.1px #f0f0f0;">Diagnostics_5.1.2023</div>
<svg class="a" style="left:22px;top:138px;" width="14" height="17" viewBox="0 0 14 17"><path d="M0.5 0.5h8.5l3.5 3.5v12H0.5z" fill="#fafafa" stroke="#8c8c8c" stroke-width="1"/><path d="M9 0.5v3.5h3.5" fill="#e0e0e0" stroke="#8c8c8c" stroke-width="0.8"/><path d="M2 3.5h5M2 5.5h8.5M2 7.5h8.5M2 9.5h8.5M2 11.5h8.5M2 13.5h8.5" stroke="#8a8a8a" stroke-width="1"/></svg>
<div class="t" style="left:40.00px;top:141.77px;font-size:11.5px;color:#f0f0f0;-webkit-text-stroke:0.1px #f0f0f0;">Diagnostics_5.1.2023</div>
<svg class="a" style="left:22px;top:159px;" width="14" height="17" viewBox="0 0 14 17"><path d="M0.5 0.5h8.5l3.5 3.5v12H0.5z" fill="#fafafa" stroke="#8c8c8c" stroke-width="1"/><path d="M9 0.5v3.5h3.5" fill="#e0e0e0" stroke="#8c8c8c" stroke-width="0.8"/><path d="M2 3.5h5M2 5.5h8.5M2 7.5h8.5M2 9.5h8.5M2 11.5h8.5M2 13.5h8.5" stroke="#8a8a8a" stroke-width="1"/></svg>
<div class="t" style="left:40.00px;top:162.77px;font-size:11.5px;color:#f0f0f0;-webkit-text-stroke:0.1px #f0f0f0;">Diagnostics_5.1.2023</div>
<svg class="a" style="left:22px;top:180px;" width="14" height="17" viewBox="0 0 14 17"><path d="M0.5 0.5h8.5l3.5 3.5v12H0.5z" fill="#fafafa" stroke="#8c8c8c" stroke-width="1"/><path d="M9 0.5v3.5h3.5" fill="#e0e0e0" stroke="#8c8c8c" stroke-width="0.8"/><path d="M2 3.5h5M2 5.5h8.5M2 7.5h8.5M2 9.5h8.5M2 11.5h8.5M2 13.5h8.5" stroke="#8a8a8a" stroke-width="1"/></svg>
<div class="t" style="left:40.00px;top:183.77px;font-size:11.5px;color:#f0f0f0;-webkit-text-stroke:0.1px #f0f0f0;">Diagnostics_5.1.2023</div>
<svg class="a" style="left:22px;top:201px;" width="14" height="17" viewBox="0 0 14 17"><path d="M0.5 0.5h8.5l3.5 3.5v12H0.5z" fill="#fafafa" stroke="#8c8c8c" stroke-width="1"/><path d="M9 0.5v3.5h3.5" fill="#e0e0e0" stroke="#8c8c8c" stroke-width="0.8"/><path d="M2 3.5h5M2 5.5h8.5M2 7.5h8.5M2 9.5h8.5M2 11.5h8.5M2 13.5h8.5" stroke="#8a8a8a" stroke-width="1"/></svg>
<div class="t" style="left:40.00px;top:204.77px;font-size:11.5px;color:#f0f0f0;-webkit-text-stroke:0.1px #f0f0f0;">Diagnostics_5.1.2023</div>
<svg class="a" style="left:22px;top:222px;" width="14" height="17" viewBox="0 0 14 17"><path d="M0.5 0.5h8.5l3.5 3.5v12H0.5z" fill="#fafafa" stroke="#8c8c8c" stroke-width="1"/><path d="M9 0.5v3.5h3.5" fill="#e0e0e0" stroke="#8c8c8c" stroke-width="0.8"/><path d="M2 3.5h5M2 5.5h8.5M2 7.5h8.5M2 9.5h8.5M2 11.5h8.5M2 13.5h8.5" stroke="#8a8a8a" stroke-width="1"/></svg>
<div class="t" style="left:40.00px;top:225.77px;font-size:11.5px;color:#f0f0f0;-webkit-text-stroke:0.1px #f0f0f0;">Diagnostics_5.1.2023</div>
<svg class="a" style="left:22px;top:243px;" width="14" height="17" viewBox="0 0 14 17"><path d="M0.5 0.5h8.5l3.5 3.5v12H0.5z" fill="#fafafa" stroke="#8c8c8c" stroke-width="1"/><path d="M9 0.5v3.5h3.5" fill="#e0e0e0" stroke="#8c8c8c" stroke-width="0.8"/><path d="M2 3.5h5M2 5.5h8.5M2 7.5h8.5M2 9.5h8.5M2 11.5h8.5M2 13.5h8.5" stroke="#8a8a8a" stroke-width="1"/></svg>
<div class="t" style="left:40.00px;top:246.77px;font-size:11.5px;color:#f0f0f0;-webkit-text-stroke:0.1px #f0f0f0;">Diagnostics_5.1.2023</div>
<svg class="a" style="left:22px;top:264px;" width="14" height="17" viewBox="0 0 14 17"><path d="M0.5 0.5h8.5l3.5 3.5v12H0.5z" fill="#fafafa" stroke="#8c8c8c" stroke-width="1"/><path d="M9 0.5v3.5h3.5" fill="#e0e0e0" stroke="#8c8c8c" stroke-width="0.8"/><path d="M2 3.5h5M2 5.5h8.5M2 7.5h8.5M2 9.5h8.5M2 11.5h8.5M2 13.5h8.5" stroke="#8a8a8a" stroke-width="1"/></svg>
<div class="t" style="left:40.00px;top:267.77px;font-size:11.5px;color:#f0f0f0;-webkit-text-stroke:0.1px #f0f0f0;">Diagnostics_5.1.2023</div>
<svg class="a" style="left:20px;top:287px;" width="17" height="14" viewBox="0 0 17 14"><rect x="0.5" y="0.5" width="16" height="12" fill="#f0f0f0" stroke="#9a9a9a" stroke-width="0.8"/><rect x="1" y="1" width="15" height="1.5" fill="#b8c4cc"/><rect x="4" y="3.5" width="5" height="7.5" fill="#1a74d4"/><path d="M10.5 4.5h4M10.5 6.5h4M10.5 8.5h4M10.5 10.5h4" stroke="#555" stroke-width="1"/></svg>
<div class="t" style="left:40.00px;top:288.77px;font-size:11.5px;color:#f0f0f0;-webkit-text-stroke:0.1px #f0f0f0;">LCPDFR.exe</div>
<svg class="a" style="left:20px;top:308px;" width="17" height="14" viewBox="0 0 17 14"><rect x="0.5" y="0.5" width="16" height="12" fill="#f0f0f0" stroke="#9a9a9a" stroke-width="0.8"/><rect x="1" y="1" width="15" height="1.5" fill="#b8c4cc"/><rect x="4" y="3.5" width="5" height="7.5" fill="#1a74d4"/><path d="M10.5 4.5h4M10.5 6.5h4M10.5 8.5h4M10.5 10.5h4" stroke="#555" stroke-width="1"/></svg>
<div class="t" style="left:40.00px;top:309.77px;font-size:11.5px;color:#f0f0f0;-webkit-text-stroke:0.1px #f0f0f0;">LCPDFR.exe</div>
<svg class="a" style="left:18px;top:327px;" width="16" height="17" viewBox="0 0 16 17"><path d="M3 0.5h8l4 4v12H3z" fill="#f2f2f2" stroke="#8a8a8a" stroke-width="0.8"/><circle cx="5" cy="11" r="3.5" fill="none" stroke="#9a9a9a" stroke-width="1.6" stroke-dasharray="1.5 1"/></svg>
<div class="t" style="left:40.00px;top:330.77px;font-size:11.5px;color:#f0f0f0;-webkit-text-stroke:0.1px #f0f0f0;">LCPDFR.ini</div>
<svg class="a" style="left:22px;top:348px;" width="14" height="17" viewBox="0 0 14 17"><path d="M1 0.5h8l4 4v12H1z" fill="#f2f2f2" stroke="#8a8a8a" stroke-width="0.8"/><rect x="3" y="6" width="8" height="7" fill="#2f7fd0"/><path d="M3 11l3-2 5 3v1H3z" fill="#8fd0ff"/></svg>
<div class="t" style="left:40.00px;top:351.77px;font-size:11.5px;color:#f0f0f0;-webkit-text-stroke:0.1px #f0f0f0;">mainmenu.png</div>
<svg class="a" style="left:22px;top:369px;" width="14" height="17" viewBox="0 0 14 17"><path d="M1 0.5h8l4 4v12H1z" fill="#f2f2f2" stroke="#8a8a8a" stroke-width="0.8"/><circle cx="7" cy="10" r="3" fill="none" stroke="#9a9a9a" stroke-width="1.8" stroke-dasharray="1.4 1"/></svg>
<div class="t" style="left:40.00px;top:372.77px;font-size:11.5px;color:#f0f0f0;-webkit-text-stroke:0.1px #f0f0f0;">Microsoft.dll</div>
</div>
<div class="a" style="left:0px;top:705px;width:1366px;height:23px;background:#303030;"></div>
<div class="t" style="left:14.00px;top:711.27px;font-size:11.5px;color:#e0e0e0;-webkit-text-stroke:0.1px #e0e0e0;transform:scaleX(1.0000);">17 items</div>
<div class="a" style="left:68px;top:711px;width:1px;height:12px;background:#cfcfcf;"></div>
<svg class="a" style="left:1316px;top:706px;" width="50" height="22" viewBox="0 0 50 22"><rect x="2.5" y="0.5" width="21" height="21" fill="#5a5a5a" stroke="#777"/>
<rect x="8" y="4" width="4" height="4" fill="#ddd"/><rect x="8" y="9" width="4" height="4" fill="#ddd"/><rect x="8" y="14" width="4" height="4" fill="#ddd"/>
<rect x="9" y="5" width="2" height="2" fill="#333"/><rect x="9" y="10" width="2" height="2" fill="#2b79d0"/><rect x="9" y="15" width="2" height="2" fill="#d22"/>
<path d="M13.5 6h3M17.5 6h3M13.5 11h3M17.5 11h3M13.5 16h3M17.5 16h3" stroke="#888" stroke-width="0.8"/>
<rect x="28" y="5" width="15" height="12" fill="#f0f0f0"/><rect x="29.5" y="6.5" width="12" height="9" fill="#3a8ad0"/><path d="M29.5 12c3-2 7-1 12 1v2.5h-12z" fill="#2f6a4a"/></svg>
<div class="a" style="left:405px;top:105px;width:550px;height:52px;background:#ffffff;overflow:hidden;">
<svg class="a" style="left:0px;top:0px;" width="550" height="52" viewBox="0 0 550 52">
<circle cx="11" cy="12" r="8" fill="#e0401f"/><circle cx="11" cy="12" r="7.3" fill="#e9492a"/>
<path d="M7.7 8.7l6.6 6.6M14.3 8.7l-6.6 6.6" stroke="#fff" stroke-width="1.4"/>
<path d="M529.5 6.5l10 10M539.5 6.5l-10 10" stroke="#5a5a5a" stroke-width="1"/>
<circle cx="26" cy="51" r="15" fill="#e0401f"/>
<path d="M19 44l14 14M33 44l-14 14" stroke="#fff" stroke-width="2.6"/>
</svg>
<div class="t" style="left:24.00px;top:7.27px;font-size:11.5px;color:#8d8d99;transform:scaleX(1.0159);">Check failed</div>
<div class="t" style="left:52.00px;top:40.46px;font-size:16px;color:#1c3da6;transform:scaleX(0.9639);">One or more issues have been detected in your setup. Please try to fix</div>
<div class="a" style="left:0px;top:46px;width:550px;height:6px;background:linear-gradient(rgba(0,0,0,0),rgba(0,0,0,0.12));"></div>
</div>
<div class="a" style="left:231px;top:157px;width:1009px;height:501px;background:#ffffff;overflow:hidden;box-shadow:0 0 10px rgba(0,0,0,0.25)">
<svg class="a" style="left:8px;top:6px;" width="17" height="17" viewBox="0 0 17 17"><path d="M4 2h11v14H2z" fill="#c9b48a"/><path d="M3 1h11l-1 14H1z" fill="#8fd0e6"/>
<path d="M3 1h11l-1 14H1z" fill="url(#npg)"/><defs><linearGradient id="npg" x1="0" y1="0" x2="1" y2="1"><stop offset="0" stop-color="#bfe8f5"/><stop offset="1" stop-color="#3e9ec0"/></linearGradient></defs>
<path d="M3 4h10M2.7 6.5h10M2.4 9h10M2.1 11.5h10" stroke="#e8f7fc" stroke-width="0.8"/>
<path d="M4 1v-0.8M6 1v-0.8M8 1v-0.8M10 1v-0.8M12 1v-0.8" stroke="#555" stroke-width="0.8"/></svg>
<div class="t" style="left:29.00px;top:9.77px;font-size:11.5px;color:#8a8a8a;transform:scaleX(0.9761);">Diagnostics_5.1.2023_21_9_8 - Notepad</div>
<svg class="a" style="left:880px;top:0px;" width="129" height="30" viewBox="0 0 129 30"><rect x="10" y="14" width="10" height="1" fill="#8a8a8a"/>
<rect x="55.5" y="9.5" width="9" height="9" fill="none" stroke="#8a8a8a"/>
<path d="M101 9l10 10M111 9l-10 10" stroke="#8a8a8a" stroke-width="1"/></svg>
<div class="t" style="left:7.00px;top:34.77px;font-size:11.5px;color:#6d6d6d;transform:scaleX(0.9474);">File</div>
<div class="t" style="left:39.00px;top:34.77px;font-size:11.5px;color:#6d6d6d;transform:scaleX(0.9524);">Edit</div>
<div class="t" style="left:73.00px;top:34.77px;font-size:11.5px;color:#6d6d6d;transform:scaleX(1.0270);">Format</div>
<div class="t" style="left:125.00px;top:34.77px;font-size:11.5px;color:#6d6d6d;transform:scaleX(1.0000);">View</div>
<div class="t" style="left:164.00px;top:34.77px;font-size:11.5px;color:#6d6d6d;transform:scaleX(1.0417);">Help</div>
<div class="a" style="left:0px;top:48px;width:1009px;height:2px;background:#f0f0f0;"></div>
<div class="a" style="left:0px;top:50px;width:993px;height:412px;background:#ffffff;overflow:hidden;">
<div class="m" style="left:4.3px;top:1.14px">[Asi loader] Using dsound
[ScriptHookDotNet] Found
[ScriptHookDotNet] Modified
[System dependencies] Verifying dependencies integrity
[System dependencies] Checking MSVCR110.DLL
[System dependencies] Checking dependencies (32-bit required: True)
[System dependencies] Resolved KERNEL32.dll to C:\Windows\SysWOW64\KERNEL32.dll
[System dependencies] Check passed
[System dependencies] Checking MSVCP110.DLL
[System dependencies] Checking dependencies (32-bit required: True)
[System dependencies] Resolved MSVCR110.dll to C:\Windows\SysWOW64\MSVCR110.dll
[System dependencies] Resolved KERNEL32.dll to C:\Windows\SysWOW64\KERNEL32.dll
[System dependencies] Check passed
[System dependencies] Checking MSCOREE.DLL
[System dependencies] Checking dependencies (32-bit required: True)
[System dependencies] Resolved KERNEL32.dll to C:\Windows\SysWOW64\KERNEL32.dll
[System dependencies] Check passed
[System dependencies] Checking SCRIPTHOOK.DLL
[System dependencies] Checking dependencies (32-bit required: True)
[System dependencies] Resolved KERNEL32.dll to C:\Windows\SysWOW64\KERNEL32.dll
[System dependencies] Resolved USER32.dll to C:\Windows\SysWOW64\USER32.dll
[System dependencies] Check passed
[System dependencies] Checking MSVCR100.DLL</div>
</div>
<div class="a" style="left:993px;top:50px;width:15px;height:412px;background:#f0f0f0;"></div>
<div class="a" style="left:994px;top:67px;width:13px;height:54px;background:#cdcdcd;"></div>
<svg class="a" style="left:993px;top:50px;" width="15" height="17" viewBox="0 0 15 17"><path d="M4 10.5l3.5-3.5 3.5 3.5" stroke="#606060" stroke-width="1.8" fill="none"/></svg>
<div class="a" style="left:0px;top:462px;width:993px;height:15px;background:#f0f0f0;"></div>
<div class="a" style="left:17px;top:463px;width:976px;height:13px;background:#cdcdcd;"></div>
<svg class="a" style="left:0px;top:462px;" width="17" height="15" viewBox="0 0 17 15"><path d="M9.5 4l-3.5 3.5 3.5 3.5" stroke="#606060" stroke-width="1.8" fill="none"/></svg>
<div class="a" style="left:993px;top:462px;width:16px;height:15px;background:#f0f0f0;"></div>
<div class="a" style="left:0px;top:477px;width:1009px;height:1px;background:#e3e3e3;"></div>
<div class="a" style="left:0px;top:478px;width:1009px;height:23px;background:#f0f0f0;"></div>
</div>
<div class="a" style="left:736px;top:409px;width:576px;height:330px;background:#ffffff;overflow:hidden;border:1px solid rgba(0,0,0,0.5);background-clip:padding-box;box-shadow:0 0 12px rgba(0,0,0,0.4)">
<svg class="a" style="left:8px;top:7px;" width="17" height="14" viewBox="0 0 17 14"><rect x="0.5" y="0.5" width="15" height="12" fill="#e8e8e8" stroke="#9a9a9a"/>
<rect x="2" y="2" width="7" height="9" fill="url(#cwg)"/><rect x="11" y="2" width="3" height="9" fill="#cfd8e0"/>
<defs><linearGradient id="cwg" x1="0" y1="0" x2="0" y2="1"><stop offset="0" stop-color="#4f86c6"/><stop offset="1" stop-color="#3ea05a"/></linearGradient></defs></svg>
<div class="t" style="left:29.50px;top:9.77px;font-size:11.5px;color:#000;transform:scaleX(1.0270);">CheckWindow</div>
<svg class="a" style="left:445px;top:0px;" width="129" height="30" viewBox="0 0 129 30"><rect x="10" y="14" width="10" height="1" fill="#000"/>
<rect x="55.5" y="9.5" width="9" height="9" fill="none" stroke="#000"/>
<path d="M101 9l10 10M111 9l-10 10" stroke="#000" stroke-width="1.1"/></svg>
<div class="t" style="left:15.00px;top:50.27px;font-size:11.5px;color:#000;transform:scaleX(1.0303);">Game folder:</div>
<div class="a" style="left:93px;top:44px;width:253px;height:22px;background:linear-gradient(#f2f2f2,#e5e5e5);border:1px solid #acacac"></div>
<div class="a" style="left:99px;top:45px;width:225px;height:20px;background:transparent;overflow:hidden;">
<div class="t" style="left:0.00px;top:5.27px;font-size:11.5px;color:#000;transform:scaleX(1.0134);">C:\Program Files (x86)\Mr DJ\Grand Theft A</div>
</div>
<svg class="a" style="left:331px;top:50px;" width="12" height="8" viewBox="0 0 12 8"><path d="M3 2.5l3 3 3-3" stroke="#444" stroke-width="1" fill="none"/></svg>
<div class="a" style="left:351px;top:44px;width:104px;height:22px;background:#dddddd;border:1px solid #707070"></div>
<div class="t" style="left:391.00px;top:50.27px;font-size:11.5px;color:#000;transform:scaleX(0.9600);">Start</div>
<div class="a" style="left:461px;top:44px;width:103px;height:22px;background:#dddddd;border:1px solid #707070"></div>
<div class="t" style="left:480.00px;top:50.27px;font-size:11.5px;color:#000;transform:scaleX(1.0667);">Open folder</div>
<div class="a" style="left:10px;top:87px;width:554px;height:240px;background:#ffffff;overflow:hidden;border:1px solid #828790">
<div class="a" style="left:0px;top:0px;width:552px;height:20px;background:linear-gradient(#ffffff,#f1f2f4);"></div>
<div class="a" style="left:0px;top:20px;width:552px;height:1px;background:#d5d5d5;"></div>
<div class="a" style="left:163px;top:1px;width:1px;height:19px;background:#e2e2e2;"></div>
<div class="a" style="left:363px;top:1px;width:1px;height:19px;background:#e2e2e2;"></div>
<div class="a" style="left:523px;top:1px;width:1px;height:19px;background:#e2e2e2;"></div>
<div class="t" style="left:63.00px;top:5.27px;font-size:11.5px;color:#000;transform:scaleX(1.0526);">Module</div>
<div class="t" style="left:247.00px;top:5.27px;font-size:11.5px;color:#000;transform:scaleX(0.9697);">Status</div>
<div class="t" style="left:420.00px;top:5.27px;font-size:11.5px;color:#000;transform:scaleX(0.9783);">Progress</div>
<div class="t" style="left:9.00px;top:26.77px;font-size:11.5px;color:#1b2560;transform:scaleX(1.0196);">Asi loader</div>
<div class="t" style="left:169.00px;top:26.77px;font-size:11.5px;color:#1b2560;transform:scaleX(1.0286);">Using dsound</div>
<div class="a" style="left:369px;top:25px;width:130px;height:12px;background:#228b22;"></div>
<div class="t" style="left:9.00px;top:47.77px;font-size:11.5px;color:#1b2560;transform:scaleX(1.0430);">ScriptHookDotNet</div>
<div class="t" style="left:169.00px;top:47.77px;font-size:11.5px;color:#1b2560;transform:scaleX(1.0446);">ScriptHookDotNet.asi modified</div>
<div class="a" style="left:369px;top:46px;width:130px;height:12px;background:#ff0000;"></div>
<div class="t" style="left:9.00px;top:68.77px;font-size:11.5px;color:#1b2560;transform:scaleX(1.0088);">System dependencies</div>
<div class="t" style="left:169.00px;top:68.77px;font-size:11.5px;color:#1b2560;transform:scaleX(1.0200);">Everything installed</div>
<div class="a" style="left:369px;top:67px;width:130px;height:12px;background:#228b22;"></div>
<div class="t" style="left:9.00px;top:89.77px;font-size:11.5px;color:#1b2560;transform:scaleX(0.9464);">LCPD First Response</div>
<div class="t" style="left:169.00px;top:89.77px;font-size:11.5px;color:#1b2560;transform:scaleX(1.0575);">Installation found</div>
<div class="a" style="left:369px;top:88px;width:130px;height:12px;background:#228b22;"></div>
<div class="t" style="left:9.00px;top:110.77px;font-size:11.5px;color:#1b2560;transform:scaleX(0.9643);">Log Check</div>
<div class="a" style="left:169px;top:105.5px;width:188px;height:20px;background:transparent;overflow:hidden;">
<div class="t" style="left:0.00px;top:5.27px;font-size:11.5px;color:#1b2560;transform:scaleX(1.0383);">Log files checked, see report for mo</div>
</div>
<div class="a" style="left:369px;top:109px;width:130px;height:12px;background:#ff0000;"></div>
</div>
</div>
<div class="t" style="left:1073.00px;top:653.49px;font-size:19.5px;color:rgba(150,150,150,0.55);transform:scaleX(1.0195);">Activate Windows</div>
<div class="t" style="left:1073.00px;top:677.23px;font-size:14.5px;color:rgba(150,150,150,0.55);transform:scaleX(1.0306);">Go to Settings to activate Windows.</div>
<div class="a" style="left:0px;top:728px;width:1366px;height:40px;background:linear-gradient(90deg,#211e2b 0px,#1f1b26 120px,#1f1b26 690px,#2c2a30 720px,#3f3f3f 750px,#424242 800px,#3f3f3f 1250px,#383739 1305px,#2a2830 1366px);"></div>
<svg class="a" style="left:0px;top:728px;" width="140" height="40" viewBox="0 0 140 40">
<path d="M16 13.2l5.7-0.8v6.7H16z M22.7 12.2l9.6-1.3v8.2h-9.6z M16 20.1h5.7v6.7L16 26z M22.7 20.1h9.6v8.2l-9.6-1.3z" fill="#fff"/>
<circle cx="74.5" cy="17.4" r="5.2" fill="none" stroke="#fff" stroke-width="1.1"/>
<path d="M70.8 21.1L64.3 27.6" stroke="#fff" stroke-width="1.2"/>
<path d="M112.3 12v2.5h10v-2.5M112.3 27v-2.5h10v2.5" stroke="#fff" stroke-width="1" fill="none"/>
<rect x="112.3" y="16" width="10" height="7" fill="none" stroke="#fff" stroke-width="1"/>
<path d="M126.8 12v15" stroke="#fff" stroke-width="1"/><rect x="125.3" y="16" width="3" height="2.5" fill="#fff"/>
</svg>
<svg class="a" style="left:158px;top:735px;" width="26" height="26" viewBox="0 0 26 26"><defs>
<linearGradient id="eg1" x1="0" y1="0" x2="0.3" y2="1"><stop offset="0" stop-color="#2aa8ee"/><stop offset="1" stop-color="#0b6ad0"/></linearGradient>
<linearGradient id="eg2" x1="0" y1="0" x2="1" y2="0.4"><stop offset="0" stop-color="#2fc0f0"/><stop offset="0.5" stop-color="#2fc4c8"/><stop offset="1" stop-color="#70e052"/></linearGradient></defs>
<circle cx="13" cy="13" r="12" fill="url(#eg1)"/>
<path d="M1.2 11.5A12 12 0 0 1 25 12.5C25 16.5 22.5 18.5 19 18.5 16 18.5 14.5 16.5 15 14 13.5 10.5 9 9 5 10 3.2 10.5 2 11.5 1.2 12.5z" fill="url(#eg2)"/>
<path d="M14.6 15.5C15.5 18.5 18.5 19.8 21.5 19.6 23 19.5 24.3 19 25.2 18.3L24.6 20.6C22.5 21.5 19 21.8 16.3 20.7 14 19.8 12.5 18 12 16.3z" fill="#1d1c26"/><circle cx="12.3" cy="13.8" r="2.8" fill="#1d1c26"/>
<path d="M9.3 13.5C9 19.5 13 23.8 18.5 23.8 21 23.8 23 22.5 24.2 20.5 22 21.5 19 21.6 16.5 20.6 13 19.2 11 16.5 9.3 13.5z" fill="#0d55a6"/>
</svg>
<svg class="a" style="left:207px;top:737px;" width="26" height="22" viewBox="0 0 26 22"><path d="M2 2h8l2 3h12v15H2z" fill="#f0c040"/><rect x="2" y="6" width="22" height="14" fill="#ffd75e"/>
<path d="M8 20v-7h10v7h-3v-4h-4v4z" fill="#2a8ad8"/><rect x="2" y="6" width="22" height="2" fill="#f5c94b"/></svg>
<svg class="a" style="left:256px;top:736px;" width="26" height="25" viewBox="0 0 26 25"><path d="M8 7V4.5C8 2.5 9.5 1.5 13 1.5s5 1 5 3V7" stroke="#29a8e8" stroke-width="2.2" fill="none"/>
<rect x="1.5" y="6" width="23" height="18" rx="2" fill="#f3f3f3"/>
<rect x="8" y="11" width="4.5" height="4.5" fill="#f25022"/><rect x="13.5" y="11" width="4.5" height="4.5" fill="#7fba00"/>
<rect x="8" y="16.5" width="4.5" height="4.5" fill="#00a4ef"/><rect x="13.5" y="16.5" width="4.5" height="4.5" fill="#ffb900"/></svg>
<svg class="a" style="left:305px;top:735px;" width="26" height="26" viewBox="0 0 26 26"><circle cx="13" cy="13" r="12" fill="#db4437"/>
<path d="M13 13L2.6 7A12 12 0 0 0 8 23.5z" fill="#0f9d58"/>
<path d="M13 13L8 23.5A12 12 0 0 0 25 13z" fill="#ffcd40"/>
<path d="M13 7h11.3A12 12 0 0 1 25 13H13z" fill="#ffcd40"/>
<circle cx="13" cy="13" r="5.6" fill="#fff"/><circle cx="13" cy="13" r="4.4" fill="#4285f4"/></svg>
<div class="a" style="left:343px;top:728px;width:45px;height:40px;background:rgba(255,255,255,0.13);"></div>
<div class="a" style="left:388px;top:728px;width:3px;height:40px;background:rgba(255,255,255,0.08);"></div>
<svg class="a" style="left:355px;top:739px;" width="24" height="18" viewBox="0 0 24 18"><rect x="0.5" y="0.5" width="23" height="16" fill="#e6e6e6" stroke="#9a9a9a" stroke-width="0.6"/>
<rect x="5" y="3" width="9" height="11" fill="#1a74d4"/><path d="M16 4h5M16 6.5h5M16 9h5M16 11.5h5M2 4h2M2 6.5h2M2 9h2M2 11.5h2" stroke="#7a7a7a" stroke-width="1"/></svg>
<svg class="a" style="left:403px;top:736px;" width="26" height="24" viewBox="0 0 26 24"><defs><linearGradient id="tng" x1="0" y1="0" x2="1" y2="1"><stop offset="0" stop-color="#cdeef8"/><stop offset="1" stop-color="#3592b8"/></linearGradient></defs>
<path d="M9 2h15l-4 20H3z" fill="#c7b58c"/><path d="M8 1h14l-4 20H1z" fill="url(#tng)"/>
<path d="M7 5h12M6.2 9h12M5.4 13h12M4.6 17h12" stroke="#e6f6fb" stroke-width="0.9"/></svg>
<div class="a" style="left:200px;top:765px;width:32px;height:3px;background:#7ad0e6;"></div>
<div class="a" style="left:232px;top:765px;width:8px;height:3px;background:#5a9aaa;"></div>
<div class="a" style="left:298px;top:765px;width:40px;height:3px;background:#7ad0e6;"></div>
<div class="a" style="left:343px;top:765px;width:45px;height:3px;background:#7ad0e6;"></div>
<div class="a" style="left:396px;top:765px;width:40px;height:3px;background:#7ad0e6;"></div>
<svg class="a" style="left:1100px;top:728px;" width="120" height="40" viewBox="0 0 120 40">
<path d="M3.5 23l5.5-5.5 5.5 5.5" stroke="#fff" stroke-width="1.2" fill="none"/>
<path d="M28.2 25a3.2 3.2 0 0 1-0.6-6.4 4.6 4.6 0 0 1 8.6-1.6 3.5 3.5 0 0 1 4.8 3.3 2.9 2.9 0 0 1 0.2 4.7z" fill="#0f6cc8"/>
<path d="M25.2 22.2C25.6 20.8 27 19.6 29.5 19.2 32 18.8 34.5 20.3 36 21.3 38 20 40.5 20.8 41.2 22.5 41.5 23.8 41 24.6 40.5 25H28.2C26.5 25 25 23.8 25.2 22.2z" fill="#2aa4ef"/>
<rect x="52.8" y="16.8" width="6.4" height="6.6" rx="1" fill="none" stroke="#f0f0f0" stroke-width="1.1"/>
<path d="M59.5 19l3-1.8v6l-3-1.8" fill="none" stroke="#f0f0f0" stroke-width="1.1"/>
<path d="M53.2 14.3c2.2-2 6.8-2 9 0M53.2 25.7c2.2 2 6.8 2 9 0" stroke="#e0e0e0" stroke-width="1" fill="none"/>
<path d="M73.5 14.5h15v9.5h-15z" fill="none" stroke="#f2f2f2" stroke-width="1.1"/>
<path d="M73.5 14.5h4.5v5h-4.5z" fill="#3a3a3a" stroke="#f2f2f2" stroke-width="1"/>
<path d="M81 24.2v2.5M77 26.6h8M74.5 19.5v7" stroke="#f2f2f2" stroke-width="1.1"/>
<path d="M97.5 18.5h2.8l4-3.5v11.8l-4-3.5h-2.8z" fill="none" stroke="#f2f2f2" stroke-width="1.1"/>
<path d="M106 19.2c.8 1.2.8 3.4 0 4.6M108.5 17.2c1.6 2.2 1.6 6.8 0 9M111 15c2.6 3.2 2.6 10.5 0 13.5" stroke="#f2f2f2" stroke-width="1.1" fill="none"/>
</svg>
<div class="t" style="left:1223.60px;top:742.57px;font-size:11.5px;color:#ffffff;-webkit-text-stroke:0.1px #ffffff;transform:scaleX(0.8800);">ENG</div>
<div class="t" style="left:1269.00px;top:733.77px;font-size:11.5px;color:#ffffff;-webkit-text-stroke:0.1px #ffffff;transform:scaleX(0.9310);">21:09</div>
<div class="t" style="left:1259.00px;top:751.27px;font-size:11.5px;color:#ffffff;-webkit-text-stroke:0.1px #ffffff;transform:scaleX(0.9231);">05.1.2023</div>
<svg class="a" style="left:1320px;top:736px;" width="46" height="32" viewBox="0 0 46 32">
<path d="M5.5 4.5h16v11h-10l-3 3v-3h-3z" fill="#fff"/>
<path d="M8 7.5h11M8 10h11M8 12.5h7" stroke="#333" stroke-width="1"/>
<circle cx="20.5" cy="19.5" r="8.2" fill="#2e2d30" stroke="#cfcfcf" stroke-width="1"/>
<rect x="41" y="0" width="1" height="32" fill="#666"/>
</svg>
<div class="t" style="left:1337.50px;top:751.27px;font-size:11.5px;color:#ffffff;-webkit-text-stroke:0.1px #ffffff;transform:scaleX(0.9286);">3</div>
</body></html>
